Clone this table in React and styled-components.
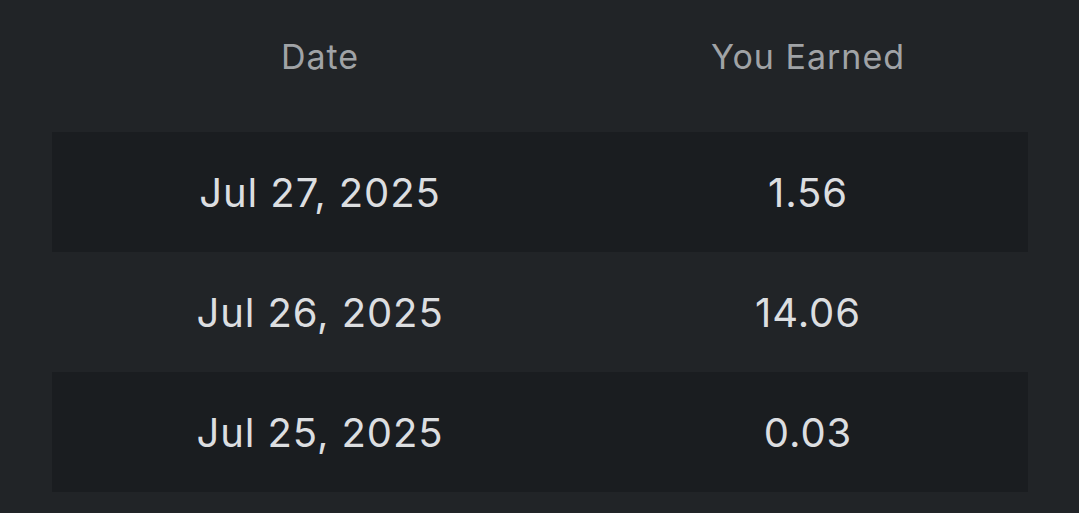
import styled, { createGlobalStyle } from "styled-components";

const GlobalStyle = createGlobalStyle`
  html, body {
    margin: 0;
    padding: 0;
    background: #212427;
  }
  body {
    font-family: Inter, "Noto Sans", sans-serif;
  }
`;

const rows = [
  { date: "Jul 27, 2025", earned: "1.56" },
  { date: "Jul 26, 2025", earned: "14.06" },
  { date: "Jul 25, 2025", earned: "0.03" },
];

function App() {
  return (
    <>
      <GlobalStyle />
      <Wrapper>
        <HeaderRow>
          <HeadCell>Date</HeadCell>
          <HeadCell>You Earned</HeadCell>
        </HeaderRow>
        {rows.map((r, i) => (
          <Row key={r.date} $striped={i % 2 === 0}>
            <Cell>{r.date}</Cell>
            <Cell>{r.earned}</Cell>
          </Row>
        ))}
      </Wrapper>
    </>
  );
}

const Wrapper = styled.div`
  width: 1079px;
  height: 513px;
  box-sizing: border-box;
  padding: 0 51px 0 52px;
  background: #212427;
`;

const HeaderRow = styled.div`
  display: grid;
  grid-template-columns: 536px 440px;
  height: 132px;
  box-sizing: border-box;
  padding-top: 35px;
  align-items: start;
`;

const HeadCell = styled.div`
  text-align: center;
  font-size: 34px;
  line-height: 44px;
  letter-spacing: 1px;
  color: #a0a3a6;
  font-weight: 400;
`;

const Row = styled.div`
  display: grid;
  grid-template-columns: 536px 440px;
  height: 120px;
  align-items: center;
  background: ${(p) => (p.$striped ? "#1a1d20" : "transparent")};
`;

const Cell = styled.div`
  text-align: center;
  font-size: 40px;
  letter-spacing: 0.9px;
  color: #dcdee0;
  font-weight: 400;
`;

export default App;
